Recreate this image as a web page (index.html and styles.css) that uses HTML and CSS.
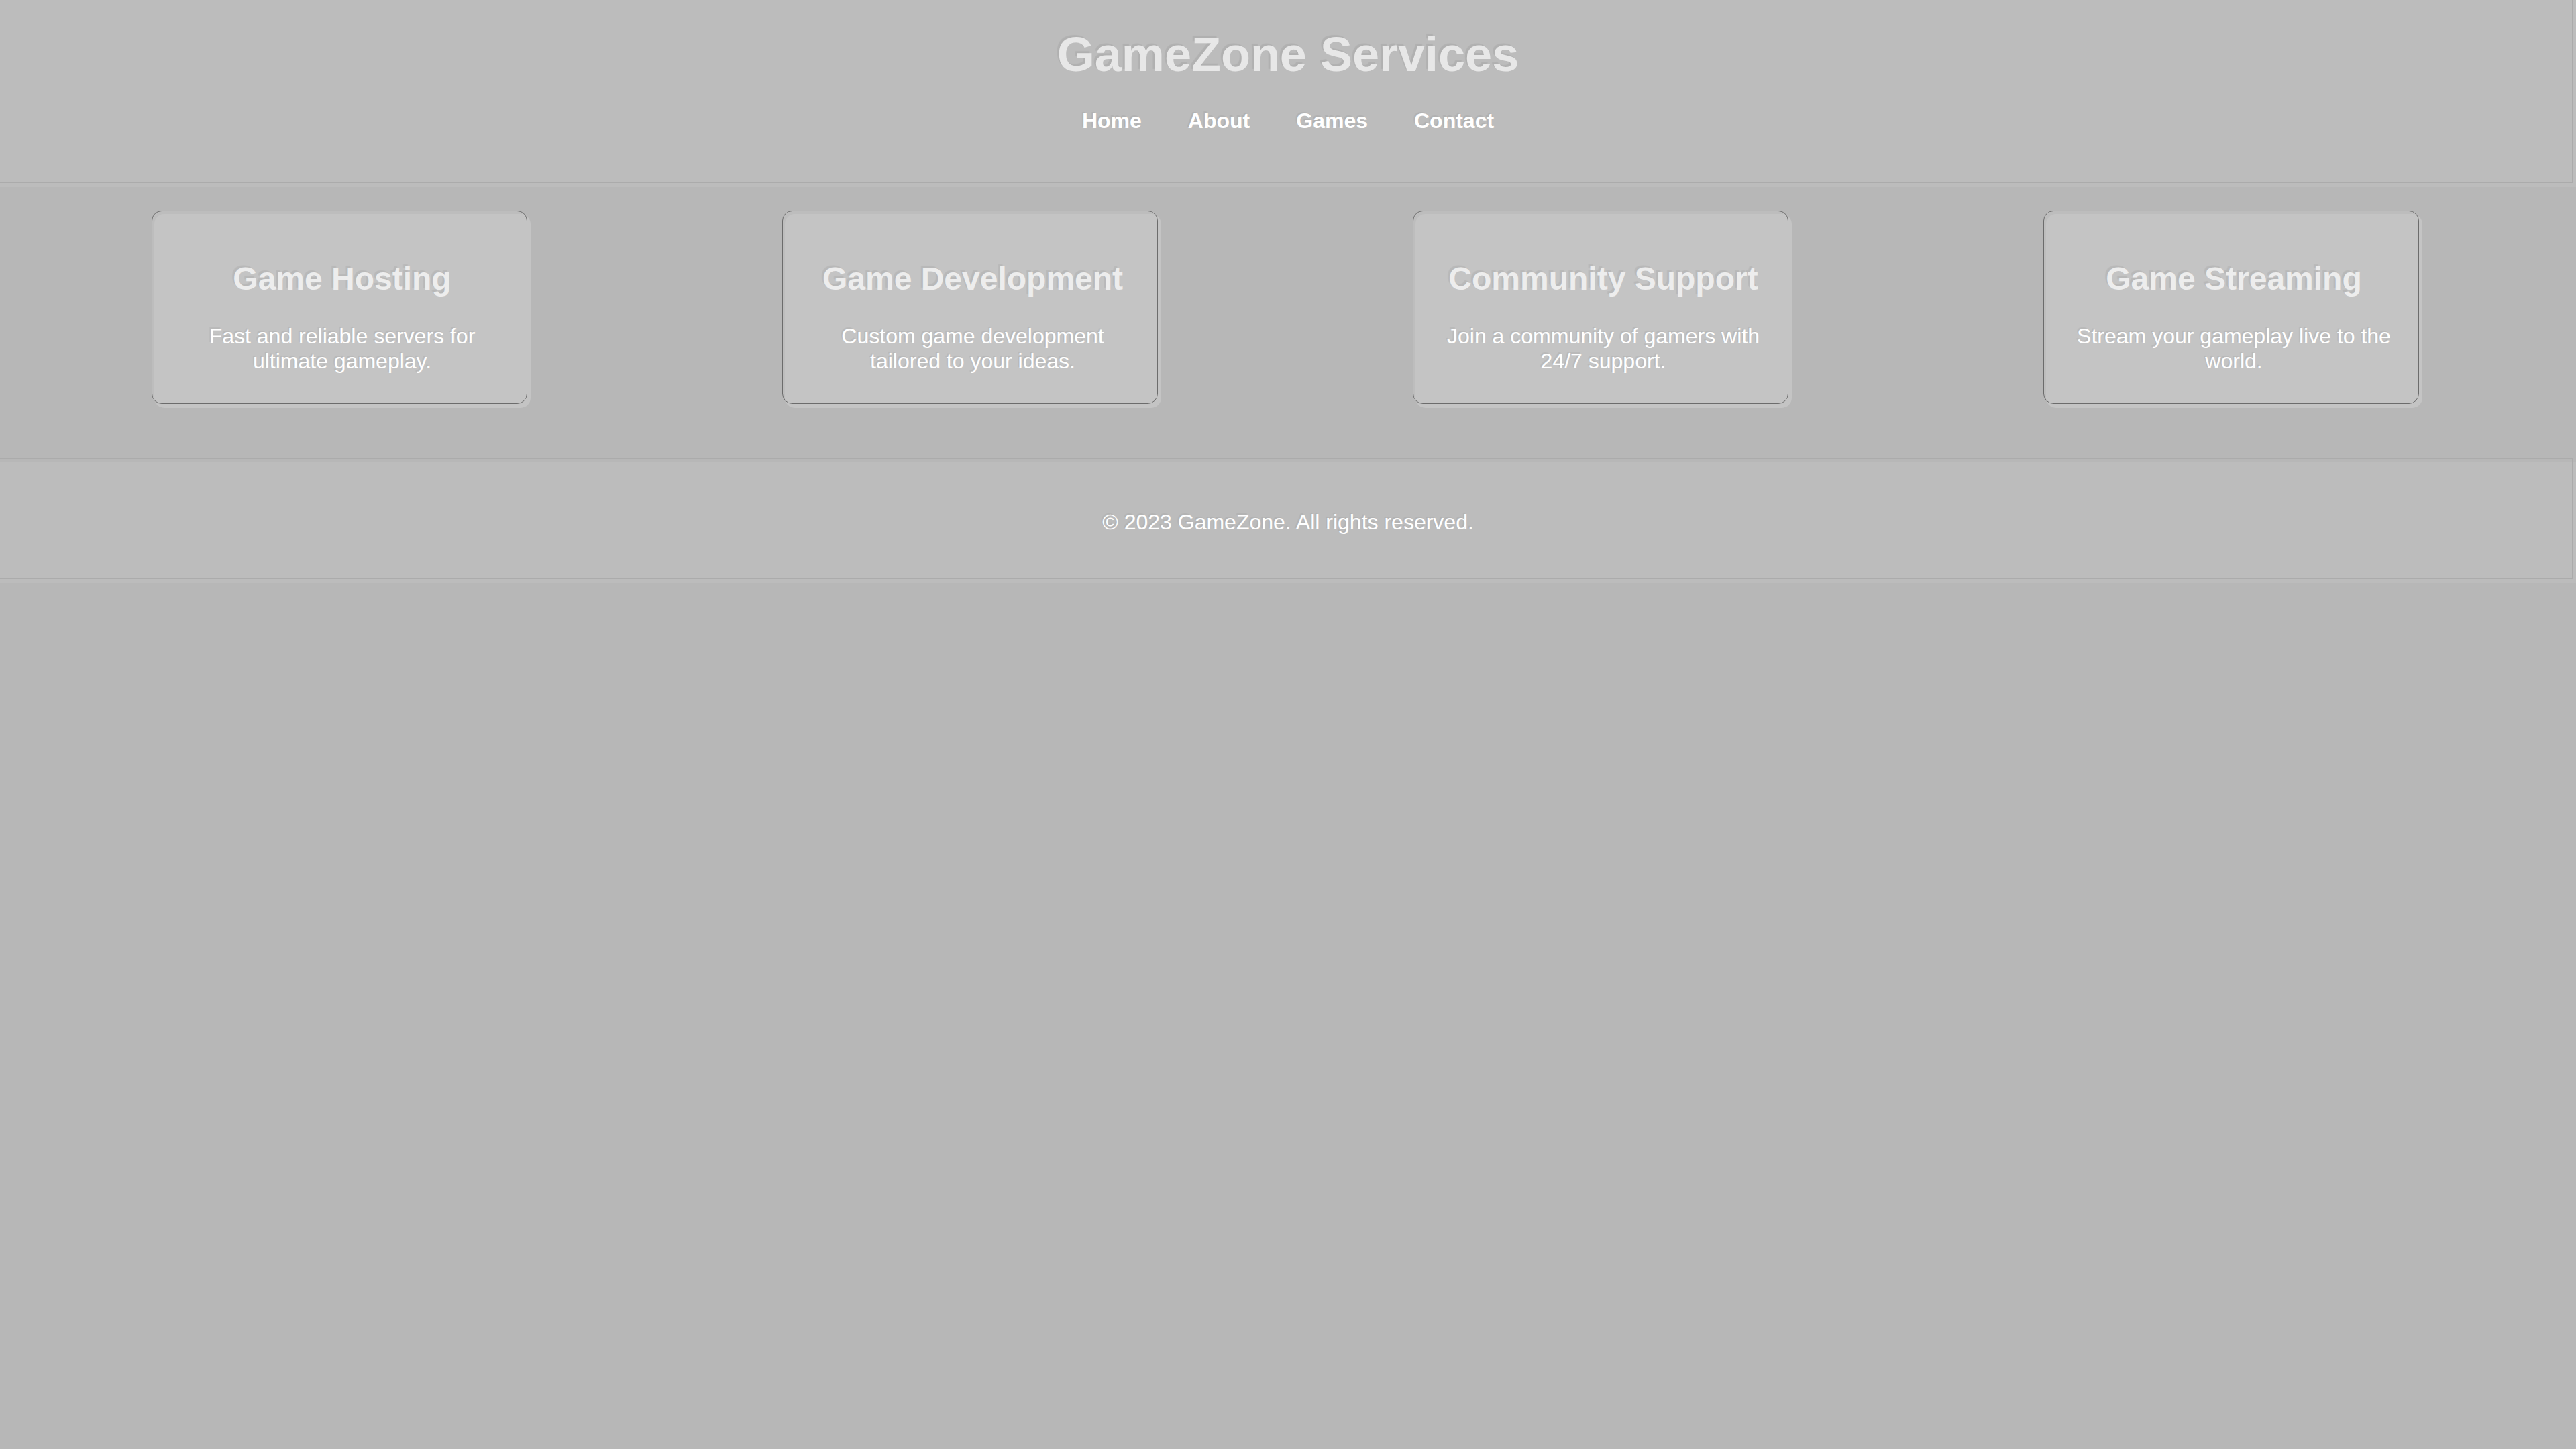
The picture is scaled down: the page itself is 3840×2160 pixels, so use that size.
FILE: index.html
```html
<!DOCTYPE html>
<html lang="en">
<head>
<meta charset="utf-8">
<title>GameZone Services</title>
<link rel="stylesheet" href="styles.css">
</head>
<body>
<header class="site-header">
  <h1 class="site-title">GameZone Services</h1>
  <nav class="site-nav">
    <ul class="nav-list">
      <li><a class="nav-link" href="#">Home</a></li>
      <li><a class="nav-link" href="#">About</a></li>
      <li><a class="nav-link" href="#">Games</a></li>
      <li><a class="nav-link" href="#">Contact</a></li>
    </ul>
  </nav>
</header>
<main class="services">
  <div class="card">
    <h2 class="card-title">Game Hosting</h2>
    <p class="card-text">Fast and reliable servers for ultimate gameplay.</p>
  </div>
  <div class="card">
    <h2 class="card-title">Game Development</h2>
    <p class="card-text">Custom game development tailored to your ideas.</p>
  </div>
  <div class="card">
    <h2 class="card-title">Community Support</h2>
    <p class="card-text">Join a community of gamers with 24/7 support.</p>
  </div>
  <div class="card">
    <h2 class="card-title">Game Streaming</h2>
    <p class="card-text">Stream your gameplay live to the world.</p>
  </div>
</main>
<footer class="site-footer">
  <p class="footer-text">&copy; 2023 GameZone. All rights reserved.</p>
</footer>
</body>
</html>
```

FILE: styles.css
```css
html, body {
  margin: 0;
  padding: 0;
}

body {
  background: #b7b7b7;
  font-family: "Liberation Sans", Arial, Helvetica, sans-serif;
  font-size: 32px;
  line-height: 37px;
  color: #ffffff;
  overflow-x: hidden;
}

.site-header {
  position: relative;
  background: #bcbcbc;
  padding: 40px 0 80px;
  text-align: center;
}

.site-header::after,
.site-footer::after {
  content: "";
  position: absolute;
  top: -5px;
  left: -5px;
  right: 5px;
  bottom: 6px;
  border: 1px solid #ababab;
  pointer-events: none;
}

.site-title {
  margin: 0 0 39px;
  font-size: 72px;
  line-height: 83px;
  font-weight: bold;
  color: #e7e7e7;
  text-shadow: -3px -3px 1px rgba(0, 0, 0, 0.06);
}

.nav-list {
  list-style: none;
  margin: 0;
  padding: 0;
  display: flex;
  justify-content: center;
  gap: 69px;
}

.nav-link {
  color: #ffffff;
  text-decoration: none;
  font-weight: bold;
  line-height: 37px;
  text-shadow: -2px -2px 1px rgba(0, 0, 0, 0.06);
}

.services {
  display: flex;
  justify-content: space-around;
  padding: 40px 40px 80px;
}

.card {
  position: relative;
  box-sizing: border-box;
  width: 561px;
  padding: 69px 40px 51px;
  background: #c4c4c4;
  border-radius: 15px;
  text-align: center;
}

.card::before {
  content: "";
  position: absolute;
  top: -5px;
  left: -4px;
  right: 5px;
  bottom: 6px;
  border: 1px solid #6c6c6c;
  border-radius: 15px;
  pointer-events: none;
}

.card::after {
  content: "";
  position: absolute;
  top: -5px;
  left: -4px;
  right: 5px;
  bottom: 6px;
  background: #bdbdbd;
  border-radius: 15px;
  z-index: -1;
}

.card-title {
  margin: 0 0 40px;
  font-size: 48px;
  line-height: 55px;
  font-weight: bold;
  color: #ededed;
  text-shadow: -3px -3px 1px rgba(0, 0, 0, 0.06);
}

.card-text {
  margin: 0;
  line-height: 37px;
  text-shadow: -2px -2px 1px rgba(0, 0, 0, 0.06);
}

.site-footer {
  position: relative;
  background: #bcbcbc;
  padding: 72px 0;
  text-align: center;
}

.footer-text {
  margin: 0;
  line-height: 37px;
  text-shadow: -2px -2px 1px rgba(0, 0, 0, 0.05);
}
```
